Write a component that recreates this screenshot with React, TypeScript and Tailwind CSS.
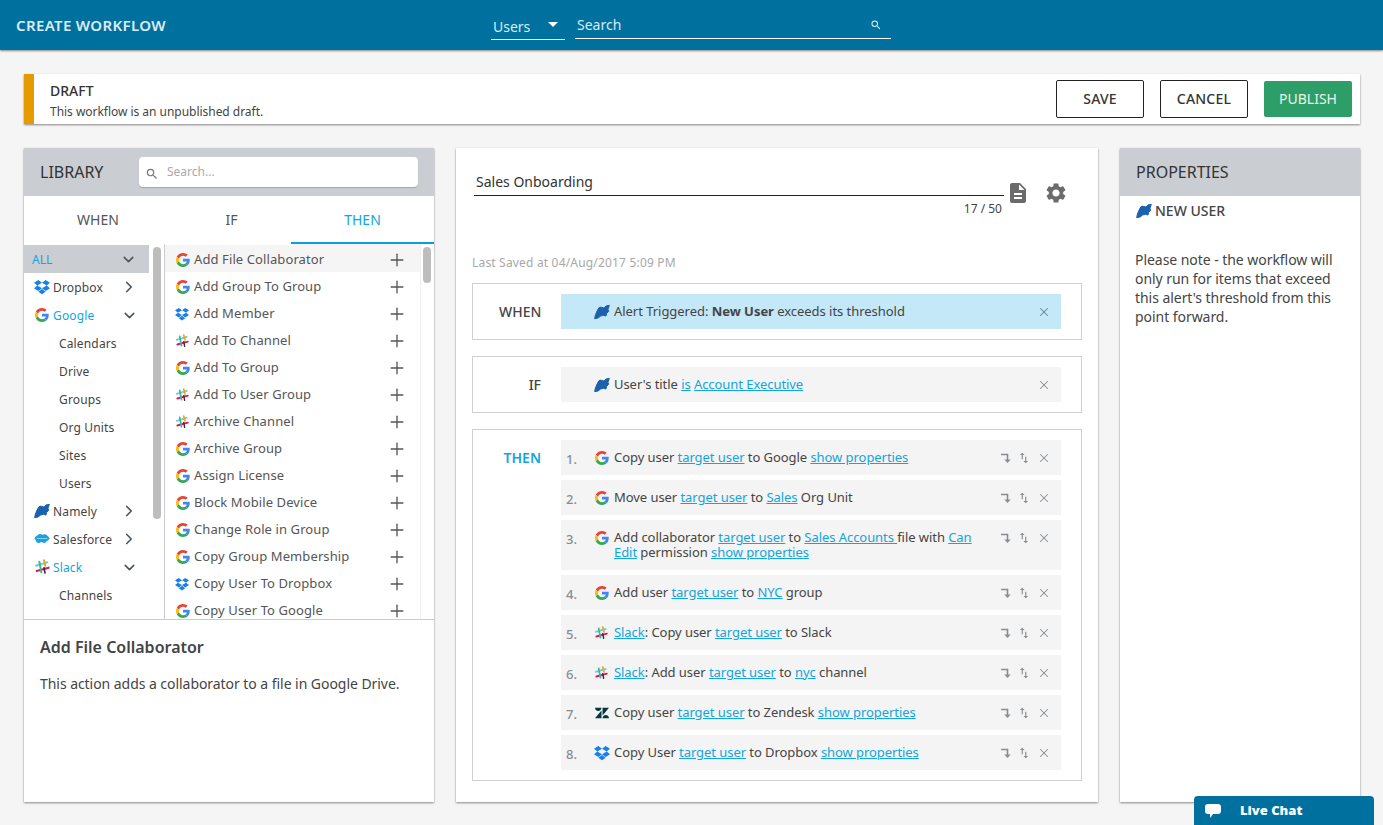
import React from "react";
import { ChevronDown, ChevronRight, Plus, X } from "lucide-react";
import { MdSearch, MdSettings, MdDescription, MdSwapVert } from "react-icons/md";
import { SiZendesk } from "react-icons/si";

type P = { s?: number };

const Google = ({ s = 14 }: P) => (
  <svg width={s} height={s} viewBox="0 0 48 48" className="ml-[1px] shrink-0">
    <path fill="#EA4335" d="M24 9.5c3.500 0 6.700 1.300 9.100 3.400l6.800-6.800C35.800 2.400 30.200 0 24 0 14.600 0 6.500 5.400 2.600 13.200l7.900 6.200C12.400 13.600 17.700 9.500 24 9.500z" />
    <path fill="#4285F4" d="M47 24.500c0-1.600-.1-3.100-.4-4.500H24v9h12.900c-.6 3-2.200 5.400-4.700 7.100l7.600 5.900C44.300 37.800 47 31.700 47 24.500z" />
    <path fill="#FBBC05" d="M10.500 28.600c-.5-1.400-.8-3-.8-4.600s.3-3.200.8-4.600l-7.900-6.200C.9 16.500 0 20.100 0 24s.9 7.500 2.600 10.800l7.900-6.200z" />
    <path fill="#34A853" d="M24 48c6.500 0 11.900-2.100 15.800-5.800l-7.600-5.900c-2.100 1.400-4.900 2.300-8.200 2.300-6.300 0-11.600-4.100-13.500-9.900l-7.900 6.200C6.500 42.600 14.600 48 24 48z" />
  </svg>
);

const Dropbox = ({ s = 16 }: P) => (
  <svg width={s} height={s} viewBox="0 0 24 24" className="shrink-0">
    <path fill="#1a7fe6" d="M6.500 1.500 0 5.700l5 4-5 4 6.500 4.200L12 13.700l5.500 4.200 6.500-4.200-5-4 5-4-6.500-4.200L12 5.700 6.500 1.500zM12 5.700l7 4-7 4-7-4 7-4zM6.500 19.300 12 15l5.500 4.300L12 23l-5.500-3.700z" />
  </svg>
);

const Namely = ({ s = 16 }: P) => (
  <svg width={s} height={s} viewBox="0 0 24 24" className="shrink-0">
    <path fill="#1c61ad" stroke="#1c61ad" strokeWidth="1.500" strokeLinejoin="round" d="M7 6 Q9 4 11 5 L15 6 L18 3 L23 2 L21 8 L22 11 L19 14 L18 18 L14 17 L10 18 L6 21 L1 22 L2 17 L4 12 Z" />
  </svg>
);

const Salesforce = ({ s = 16 }: P) => (
  <svg width={s} height={s} viewBox="0 0 24 24" className="shrink-0">
    <g fill="#1ba1de">
      <ellipse cx="12" cy="11" rx="11" ry="5.500" />
      <circle cx="9" cy="8.500" r="4" />
      <circle cx="16" cy="9" r="4" />
      <circle cx="7" cy="14" r="4" />
      <circle cx="15" cy="14.500" r="3.500" />
    </g>
    <rect x="4" y="10.500" width="16" height="1.200" fill="#ffffff" opacity="0.6" />
  </svg>
);

const Slack = ({ s = 16 }: P) => (
  <svg width={s} height={s} viewBox="0 0 24 24" className="shrink-0">
    <path stroke="#6ecadc" strokeWidth="3" strokeLinecap="round" d="M3 10 20 5" />
    <path stroke="#e01563" strokeWidth="3.200" strokeLinecap="round" d="M4 18 22 13" />
    <path stroke="#3eb890" strokeWidth="3" strokeLinecap="round" d="M8 4 11 20" />
    <path stroke="#e9a820" strokeWidth="3" strokeLinecap="round" d="M15 2 17 10" />
    <path stroke="#3a2a3c" strokeWidth="2.400" strokeLinecap="round" d="M15 13 16.500 21" />
  </svg>
);

const Zendesk = ({ s = 14 }: P) => <SiZendesk size={s} color="#03363d" className="ml-[1px] shrink-0" />;

const DownRight = () => (
  <svg width="12" height="12" viewBox="0 0 12 12" className="shrink-0">
    <path d="M1 2.500h6.500v6" fill="none" stroke="#868d95" strokeWidth="1.600" />
    <path d="M4.300 7.500h6.400L7.500 11z" fill="#868d95" />
  </svg>
);

const Link = ({ children }: { children: React.ReactNode }) => (
  <span className="text-[#12a5de] underline">{children}</span>
);

const leftItems: { label: string; icon?: React.ReactNode; open?: boolean; sub?: boolean; active?: boolean }[] = [
  { label: "Dropbox", icon: <Dropbox /> },
  { label: "Google", icon: <Google />, open: true, active: true },
  { label: "Calendars", sub: true },
  { label: "Drive", sub: true },
  { label: "Groups", sub: true },
  { label: "Org Units", sub: true },
  { label: "Sites", sub: true },
  { label: "Users", sub: true },
  { label: "Namely", icon: <Namely /> },
  { label: "Salesforce", icon: <Salesforce /> },
  { label: "Slack", icon: <Slack />, open: true, active: true },
  { label: "Channels", sub: true },
  { label: "Groups", sub: true },
];

const actions: [string, React.ReactNode][] = [
  ["Add File Collaborator", <Google />],
  ["Add Group To Group", <Google />],
  ["Add Member", <Dropbox s={14} />],
  ["Add To Channel", <Slack s={14} />],
  ["Add To Group", <Google />],
  ["Add To User Group", <Slack s={14} />],
  ["Archive Channel", <Slack s={14} />],
  ["Archive Group", <Google />],
  ["Assign License", <Google />],
  ["Block Mobile Device", <Google />],
  ["Change Role in Group", <Google />],
  ["Copy Group Membership", <Google />],
  ["Copy User To Dropbox", <Dropbox s={14} />],
  ["Copy User To Google", <Google />],
];

const steps: [React.ReactNode, React.ReactNode][] = [
  [<Google />, <>Copy user <Link>target user</Link> to Google <Link>show properties</Link></>],
  [<Google />, <>Move user <Link>target user</Link> to <Link>Sales</Link> Org Unit</>],
  [<Google />, <>Add collaborator <Link>target user</Link> to <Link>Sales Accounts </Link>file with <Link>Can Edit</Link> permission <Link>show properties</Link></>],
  [<Google />, <>Add user <Link>target user</Link> to <Link>NYC</Link> group</>],
  [<Slack s={14} />, <><Link>Slack</Link>: Copy user <Link>target user</Link> to Slack</>],
  [<Slack s={14} />, <><Link>Slack</Link>: Add user <Link>target user</Link> to <Link>nyc</Link> channel</>],
  [<Zendesk />, <>Copy user <Link>target user</Link> to Zendesk <Link>show properties</Link></>],
  [<Dropbox />, <>Copy User <Link>target user</Link> to Dropbox <Link>show properties</Link></>],
];

const Scrollbar = ({ h }: { h: string }) => (
  <div className={`w-[8px] rounded-[4px] bg-[#bdbdbd] ${h}`} />
);

export default function App() {
  return (
    <div className="relative h-[825px] overflow-hidden bg-[#f5f5f5] text-[#444] font-['Open_Sans',sans-serif]">
      <header className="flex h-[50px] items-center bg-[#00719f] pl-[16px] text-white shadow-[0_1px_2px_rgba(0,0,0,0.45)]">
        <div className="w-[475px] text-[15px] font-semibold tracking-[0.35px] text-[#dcecf3]">CREATE WORKFLOW</div>
        <div className="flex h-[50px] items-start">
          <div className="mt-[14px] flex h-[26px] w-[74px] items-center justify-between border-b border-white pl-[2px] text-[14px] text-[#d9ebf3]">
            <span className="mb-[1px]">Users</span>
            <span className="mb-[4px] mr-[7px] h-0 w-0 border-x-[5px] border-t-[5px] border-x-transparent border-t-white" />
          </div>
          <div className="ml-[10px] mt-[14px] flex h-[25px] w-[316px] items-center justify-between border-b border-white pl-[2px] text-[14px] leading-[20px] text-[#d9ebf3]">
            <span className="mb-[3px]">Search</span>
            <MdSearch size={12} className="mb-[3px] mr-[9px]" color="#e6f1f6" />
          </div>
        </div>
      </header>

      <div className="ml-[24px] mt-[24px] flex h-[50px] w-[1336px] items-stretch bg-white shadow-[0_1px_2px_rgba(0,0,0,0.45)]">
        <div className="w-[10px] bg-[#e59a00]" />
        <div className="flex flex-1 flex-col pl-[16px] pt-[7px]">
          <div className="text-[14px] font-medium leading-[19px] text-[#333]">DRAFT</div>
          <div className="mt-[3px] text-[12px] leading-[17px] tracking-[-0.03px] text-[#444]">This workflow is an unpublished draft.</div>
        </div>
        <div className="flex items-center gap-[16px] pr-[8px]">
          <div className="flex h-[38px] w-[88px] items-center justify-center rounded-[2px] border border-[#222] pb-[2px] text-[14px] font-medium tracking-[0.2px] text-[#333]">SAVE</div>
          <div className="flex h-[38px] w-[88px] items-center justify-center rounded-[2px] border border-[#222] pb-[2px] text-[14px] font-medium tracking-[0.2px] text-[#333]">CANCEL</div>
          <div className="flex h-[36px] w-[88px] items-center justify-center rounded-[2px] bg-[#2e9e68] pb-[2px] text-[14px] text-[#e8f5ee]">PUBLISH</div>
        </div>
      </div>

      <div className="ml-[24px] mt-[24px] flex h-[654px] w-[1336px] gap-[22px]">
        {/* Library */}
        <section className="flex w-[410px] flex-col bg-white shadow-[0_1px_2px_rgba(0,0,0,0.45)]">
          <div className="flex h-[48px] shrink-0 items-center bg-[#caced2] pl-[16px]">
            <div className="w-[99px] text-[16px] text-[#333]">LIBRARY</div>
            <div className="flex h-[30px] w-[279px] items-center rounded-[4px] bg-white pl-[6px] shadow-[0_1px_1px_rgba(0,0,0,0.2)]">
              <MdSearch size={14} color="#777" className="mt-[3px]" />
              <span className="ml-[8px] text-[12px] text-[#aaa]">Search...</span>
            </div>
          </div>
          <div className="flex h-[48px] shrink-0 text-[14px]">
            <div className="flex w-[148px] items-center justify-center pb-[2px] text-[#555]">WHEN</div>
            <div className="flex w-[119px] items-center justify-center pb-[2px] text-[#555]">IF</div>
            <div className="flex flex-1 items-center justify-center border-b-2 border-[#08a0dc] text-[#12a5de]">THEN</div>
          </div>
          <div className="flex h-[376px] shrink-0 overflow-hidden border-b border-[#ccc]">
            <div className="w-[125px] shrink-0 pt-[1px]">
              <div className="flex h-[28px] items-center justify-between bg-[#caced2] pl-[8px] pr-[12px] pt-[1px] text-[12px] text-[#12a5de]">
                <span>ALL</span>
                <ChevronDown size={17} strokeWidth={2.2} color="#4a5560" />
              </div>
              {leftItems.map((it, i) => (
                <div key={i} className={`flex h-[28px] items-center text-[12px] tracking-[0.15px] ${it.sub ? "pl-[35px]" : "pl-[9px]"} ${it.active ? "text-[#12a5de]" : "text-[#444]"}`}>
                  {it.icon && <span className="ml-[1px] flex w-[19px] shrink-0 items-center">{it.icon}</span>}
                  <span className="whitespace-nowrap pt-[2px]">{it.label}</span>
                  {!it.sub && (
                    <span className="ml-auto mr-[11px]">
                      {it.open ? <ChevronDown size={17} strokeWidth={2.2} color="#4a5560" /> : <ChevronRight size={18} strokeWidth={2.2} color="#4a5560" />}
                    </span>
                  )}
                </div>
              ))}
            </div>
            <div className="w-[16px] shrink-0 border-r border-[#ccc] pl-[4px] pt-[3px]">
              <Scrollbar h="h-[272px]" />
            </div>
            <div className="w-[255px] shrink-0 pt-[1px]">
              {actions.map(([label, icon], i) => (
                <div key={i} className={`flex h-[27px] items-center pl-[10px] pr-[13px] pt-[2px] text-[13px] ${i === 0 ? "bg-[#f5f5f5]" : ""}`}>
                  <span className="flex w-[19px] shrink-0 items-center">{icon}</span>
                  <span className="flex-1 whitespace-nowrap pt-[1px] tracking-[0.1px] text-[#555]">{label}</span>
                  <Plus size={20} strokeWidth={1.6} color="#555" />
                </div>
              ))}
            </div>
            <div className="flex-1 border-l border-[#eee] pl-[2px] pt-[3px]">
              <Scrollbar h="h-[36px]" />
            </div>
          </div>
          <div className="px-[16px] pt-[16px]">
            <div className="text-[16px] font-semibold leading-[22px] text-[#444]">Add File Collaborator</div>
            <div className="mt-[16px] text-[14px] leading-[19px] tracking-[-0.05px] text-[#444]">This action adds a collaborator to a file in Google Drive.</div>
          </div>
        </section>

        {/* Center */}
        <section className="flex w-[642px] flex-col bg-white pl-[16px] pr-[16px] shadow-[0_1px_2px_rgba(0,0,0,0.45)]">
          <div className="flex h-[60px] shrink-0 items-start pt-[24px]">
            <div className="ml-[2px] w-[530px]">
              <div className="h-[24px] border-b border-[#222] pl-[2px] text-[14px] leading-[20px] text-[#333]">Sales Onboarding</div>
              <div className="mt-[5px] pr-[2px] text-right text-[12px] leading-[16px] text-[#444]">17 / 50</div>
            </div>
            <MdDescription size={24} color="#6b6b6b" className="ml-[2px] mt-[9px]" />
            <MdSettings size={24} color="#6b6b6b" className="ml-[14px] mt-[9px]" />
          </div>
          <div className="mt-[47px] text-[12px] leading-[16px] tracking-[0.18px] text-[#a8a8a8]">Last Saved at 04/Aug/2017 5:09 PM</div>
          <div className="mt-[12px] flex h-[57px] items-center border border-[#d0d0d4] pl-[26px] pr-[20px]">
            <div className="w-[42px] text-right text-[14px] font-medium text-[#444]">WHEN</div>
            <div className="ml-[20px] flex h-[35px] flex-1 items-center bg-[#c4e8f7] pl-[33px] pr-[10px] text-[13px] text-[#444]">
              <Namely />
              <span className="ml-[4px] flex-1 tracking-[-0.04px]">Alert Triggered: <b className="font-bold">New User</b> exceeds its threshold</span>
              <X size={14} color="#5d8a9c" strokeWidth={1.75} />
            </div>
          </div>
          <div className="mt-[16px] flex h-[57px] items-center border border-[#d0d0d4] pl-[26px] pr-[20px]">
            <div className="w-[42px] text-right text-[14px] font-medium text-[#444]">IF</div>
            <div className="ml-[20px] flex h-[35px] flex-1 items-center bg-[#f4f4f4] pl-[33px] pr-[10px] text-[13px] text-[#444]">
              <Namely />
              <span className="ml-[4px] flex-1 tracking-[-0.06px]">User's title <Link>is</Link> <Link>Account Executive</Link></span>
              <X size={14} color="#868d95" strokeWidth={1.75} />
            </div>
          </div>
          <div className="mt-[16px] flex border border-[#d0d0d4] py-[10px] pl-[26px] pr-[20px]">
            <div className="w-[42px] pt-[8px] text-right text-[14px] font-semibold leading-[19px] text-[#12a5de]">THEN</div>
            <div className="ml-[20px] flex flex-1 flex-col gap-[5px]">
              {steps.map(([icon, text], i) => (
                <div key={i} className="flex items-start bg-[#f4f4f4] py-[10px] pl-[5px] pr-[10px] text-[13px] leading-[15px] text-[#444]">
                  <span className="mt-[3px] w-[28px] shrink-0 text-[13px] font-medium leading-[12px] text-[#868d95]">{i + 1}.</span>
                  <span className="flex h-[15px] w-[20px] shrink-0 items-center">{icon}</span>
                  <span className="w-[366px] shrink-0 tracking-[-0.06px]">{text}</span>
                  <span className="ml-auto mt-[1px] flex items-center gap-[5px]">
                    <DownRight />
                    <MdSwapVert size={14} color="#868d95" />
                    <X size={14} color="#868d95" strokeWidth={1.75} className="ml-[1px]" />
                  </span>
                </div>
              ))}
            </div>
          </div>
        </section>

        {/* Properties */}
        <section className="flex w-[240px] flex-col bg-white shadow-[0_1px_2px_rgba(0,0,0,0.45)]">
          <div className="flex h-[48px] shrink-0 items-center bg-[#caced2] pl-[16px] text-[16px] text-[#333]">PROPERTIES</div>
          <div className="flex items-center pl-[16px] pt-[6px] text-[14px] font-medium leading-[18px] text-[#444]">
            <Namely />
            <span className="ml-[3px]">NEW USER</span>
          </div>
          <p className="mt-[30px] pl-[15px] pr-[20px] text-[14px] leading-[19px] tracking-[-0.05px] text-[#444]">
            Please note - the workflow will only run for items that exceed this alert's threshold from this point forward.
          </p>
        </section>
      </div>

      <div className="absolute bottom-0 left-[1194px] flex h-[29px] w-[180px] items-center rounded-t-[4px] bg-[#00719f] pl-[10px] font-['Inter',sans-serif] text-[13px] font-black text-white">
        <svg width="18" height="16" viewBox="0 0 18 16" className="shrink-0">
          <path fill="#fff" d="M4 1h10a3 3 0 0 1 3 3v4a3 3 0 0 1-3 3H9l-3 4v-4H4a3 3 0 0 1-3-3V4a3 3 0 0 1 3-3z" />
        </svg>
        <span className="ml-[18px]">Live Chat</span>
      </div>
    </div>
  );
}
